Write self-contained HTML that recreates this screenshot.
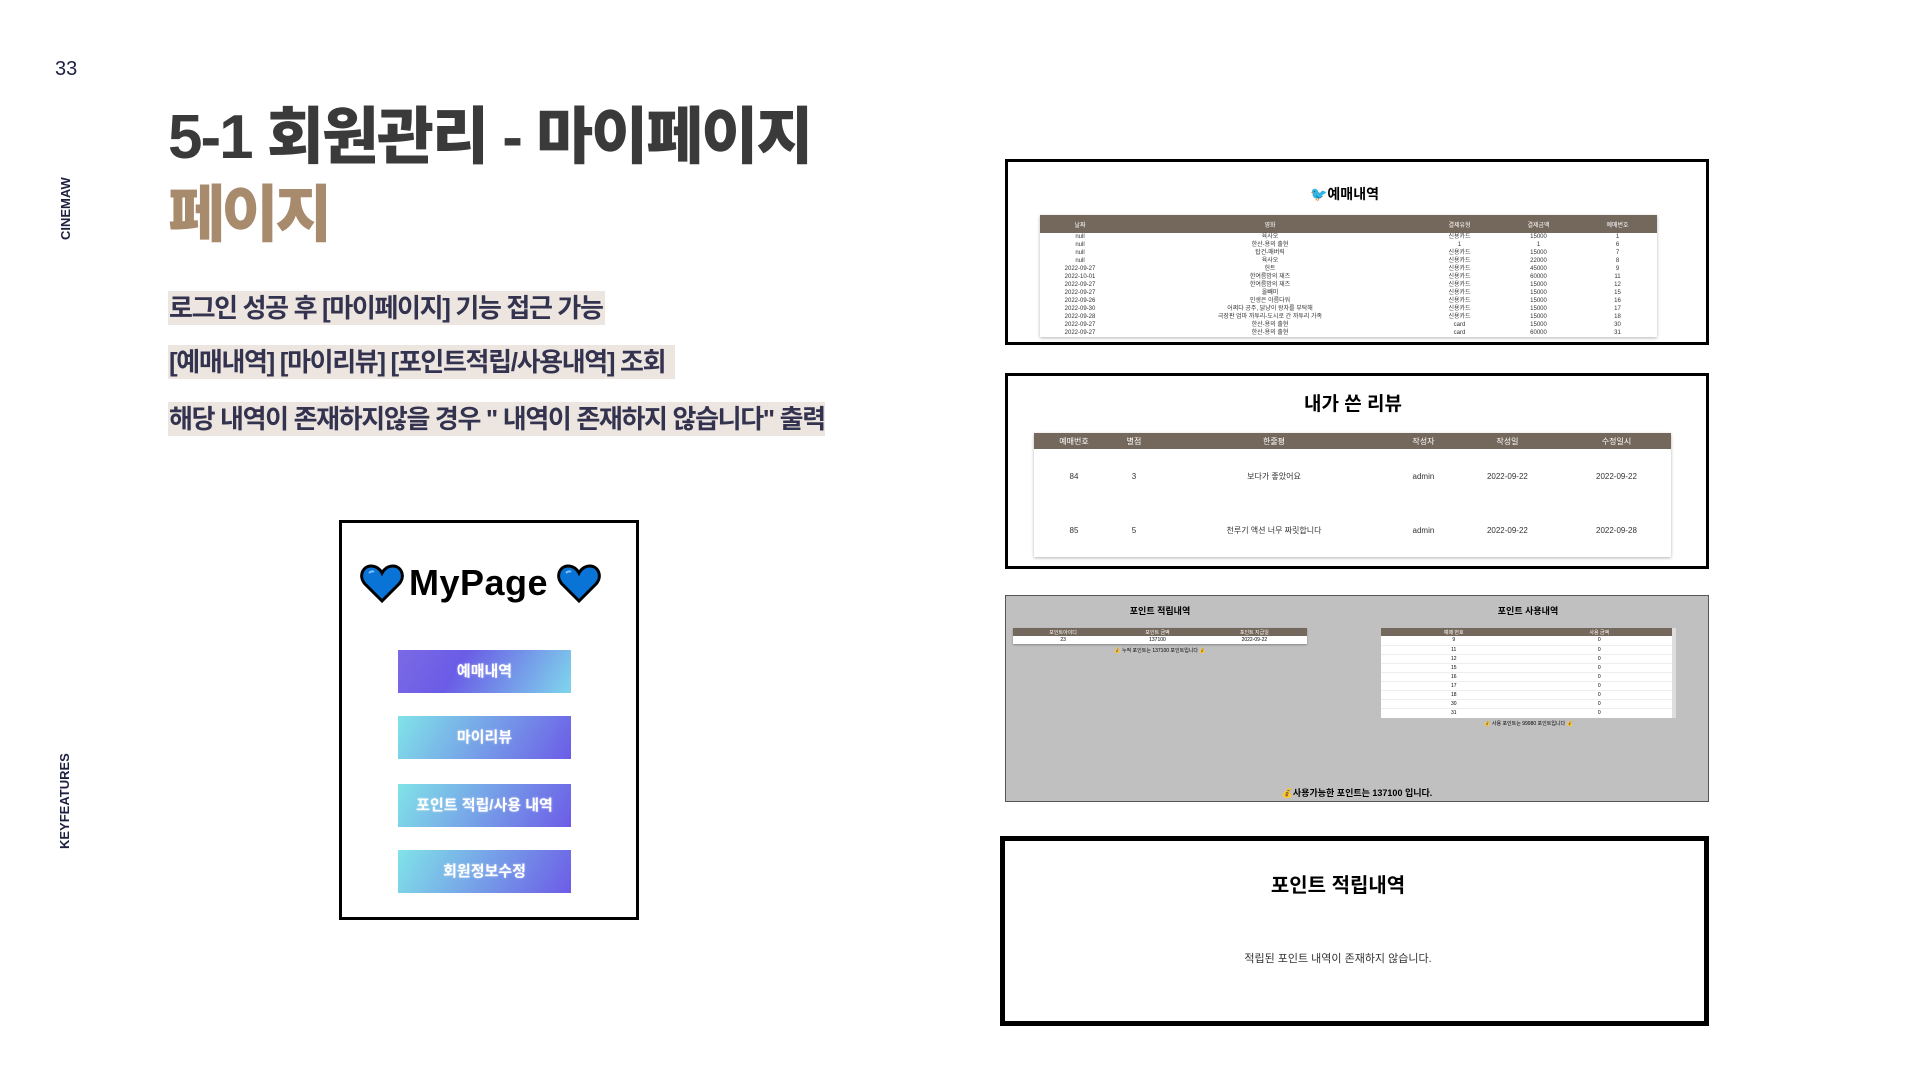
<!DOCTYPE html>
<html><head><meta charset="utf-8">
<style>
*{margin:0;padding:0;box-sizing:border-box}
body{width:1920px;height:1080px;background:#fff;position:relative;overflow:hidden;font-family:"Liberation Sans","Noto Sans CJK KR",sans-serif}
.a{position:absolute}
.vt{writing-mode:vertical-rl;transform:rotate(180deg);font-weight:bold;color:#1e2040;font-size:13px;letter-spacing:0}
.t1{left:168px;top:100px;font-size:62px;font-weight:900;color:#3a3a3a;letter-spacing:-2px;line-height:76px;white-space:nowrap}
.t2{left:168px;top:178px;font-size:62px;font-weight:900;color:#a88a6c;letter-spacing:-3.5px;line-height:76px}
.hl{left:168px;height:34px;background:#ede6e0;color:#33334f;font-size:26px;font-weight:bold;letter-spacing:-1.35px;line-height:34px;white-space:nowrap;padding:0 1px}
.panel{border:3px solid #000;background:#fff}
.brown{background:#74685d;color:#fff}
.btn{left:398px;width:173px;height:43px;color:#fff;font-weight:bold;font-size:15px;text-align:center;line-height:43px;text-shadow:0 0 2px rgba(255,255,255,.5)}
table{border-collapse:collapse;width:100%}
td,th{text-align:center;font-weight:normal;white-space:nowrap}
.bk td{line-height:7px;height:8px;padding:0}
</style></head><body>
<div class="a" style="left:55px;top:58px;font-size:20px;color:#1e2040">33</div>
<div class="a vt" style="left:58px;top:184px;height:56px">CINEMAW</div>
<div class="a vt" style="left:57px;top:763px;height:86px">KEYFEATURES</div>

<div class="a t1">5-1 회원관리 - 마이페이지</div>
<div class="a t2">페이지</div>
<div class="a hl" style="top:291px;width:437px">로그인 성공 후 [마이페이지] 기능 접근 가능</div>
<div class="a hl" style="top:345px;width:507px">[예매내역] [마이리뷰] [포인트적립/사용내역] 조회</div>
<div class="a hl" style="top:402px;width:657px">해당 내역이 존재하지않을 경우 " 내역이 존재하지 않습니다" 출력</div>

<!-- MyPage -->
<div class="a" style="left:339px;top:520px;width:300px;height:400px;border:3px solid #000;background:#fff"></div>
<svg class="a" style="left:360px;top:564px" width="44" height="40" viewBox="0 0 44 40"><path d="M22 37 L5 20 C-2 12 3 2 11 2 C16 2 20 5 22 9 C24 5 28 2 33 2 C41 2 46 12 39 20 Z" fill="#0a73d6" stroke="#000" stroke-width="3"/><path d="M9 9 C11 7 13 7 14 8" stroke="#7fc1ff" stroke-width="2" fill="none"/></svg>
<div class="a" style="left:409px;top:562px;font-size:36px;font-weight:bold;color:#000;font-family:'Liberation Sans',sans-serif;letter-spacing:0.5px">MyPage</div>
<svg class="a" style="left:557px;top:564px" width="44" height="40" viewBox="0 0 44 40"><path d="M22 37 L5 20 C-2 12 3 2 11 2 C16 2 20 5 22 9 C24 5 28 2 33 2 C41 2 46 12 39 20 Z" fill="#0a73d6" stroke="#000" stroke-width="3"/><path d="M9 9 C11 7 13 7 14 8" stroke="#7fc1ff" stroke-width="2" fill="none"/></svg>
<div class="a btn" style="top:650px;background:linear-gradient(120deg,#7b6ae6 0%,#6a5ce6 35%,#7fd6ec 100%)">예매내역</div>
<div class="a btn" style="top:716px;background:linear-gradient(120deg,#80e3e8 0%,#6c5ce7 100%)">마이리뷰</div>
<div class="a btn" style="top:784px;background:linear-gradient(120deg,#80e3e8 0%,#6c5ce7 100%)">포인트 적립/사용 내역</div>
<div class="a btn" style="top:850px;background:linear-gradient(120deg,#80e3e8 0%,#6c5ce7 100%)">회원정보수정</div>

<!-- 예매내역 -->
<div class="a panel" style="left:1005px;top:159px;width:704px;height:186px"></div>
<div class="a" style="left:1310px;top:184px;font-size:14px;font-weight:bold">🐦예매내역</div>
<div class="a" style="left:1040px;top:215px;width:617px;height:122px;overflow:hidden;box-shadow:0 1px 3px rgba(0,0,0,.3);font-size:6px;color:#333;background:#fff">
<table class="bk"><tr class="brown" style="height:18px"><th style="width:80px">날짜</th><th style="width:300px">영화</th><th>결제유형</th><th>결제금액</th><th>예매번호</th></tr>
<tr><td>null</td><td>육사오</td><td>신용카드</td><td>15000</td><td>1</td></tr>
<tr><td>null</td><td>한산-용의 출현</td><td>1</td><td>1</td><td>6</td></tr>
<tr><td>null</td><td>탑건-매버릭</td><td>신용카드</td><td>15000</td><td>7</td></tr>
<tr><td>null</td><td>육사오</td><td>신용카드</td><td>22000</td><td>8</td></tr>
<tr><td>2022-09-27</td><td>헌트</td><td>신용카드</td><td>45000</td><td>9</td></tr>
<tr><td>2022-10-01</td><td>한여름밤의 재즈</td><td>신용카드</td><td>60000</td><td>11</td></tr>
<tr><td>2022-09-27</td><td>한여름밤의 재즈</td><td>신용카드</td><td>15000</td><td>12</td></tr>
<tr><td>2022-09-27</td><td>올빼미</td><td>신용카드</td><td>15000</td><td>15</td></tr>
<tr><td>2022-09-26</td><td>인생은 아름다워</td><td>신용카드</td><td>15000</td><td>16</td></tr>
<tr><td>2022-09-30</td><td>어쩌다 공주, 닭냥이 왕자를 부탁해</td><td>신용카드</td><td>15000</td><td>17</td></tr>
<tr><td>2022-09-28</td><td>극장판 엄마 까투리-도시로 간 까투리 가족</td><td>신용카드</td><td>15000</td><td>18</td></tr>
<tr><td>2022-09-27</td><td>한산-용의 출현</td><td>card</td><td>15000</td><td>30</td></tr>
<tr><td>2022-09-27</td><td>한산-용의 출현</td><td>card</td><td>60000</td><td>31</td></tr>
</table></div>

<!-- 리뷰 -->
<div class="a panel" style="left:1005px;top:373px;width:704px;height:196px"></div>
<div class="a" style="left:1005px;top:389px;width:704px;text-align:center;font-size:19px;font-weight:bold;padding-right:8px">내가 쓴 리뷰</div>
<div class="a" style="left:1034px;top:433px;width:637px;height:124px;box-shadow:0 1px 3px rgba(0,0,0,.3);font-size:8px;color:#333;background:#fff">
<table><tr class="brown" style="height:16px"><th style="width:80px">예매번호</th><th style="width:40px">별점</th><th style="width:240px">한줄평</th><th>작성자</th><th>작성일</th><th>수정일시</th></tr>
<tr style="height:54px"><td>84</td><td>3</td><td>보다가 좋았어요</td><td>admin</td><td>2022-09-22</td><td>2022-09-22</td></tr>
<tr style="height:54px"><td>85</td><td>5</td><td>천루기 액션 너무 짜릿합니다</td><td>admin</td><td>2022-09-22</td><td>2022-09-28</td></tr>
</table></div>

<!-- 포인트 gray -->
<div class="a" style="left:1005px;top:595px;width:704px;height:207px;background:#c0c0c0;border:1px solid #555"></div>
<div class="a" style="left:1100px;top:604px;width:120px;text-align:center;font-size:9px;font-weight:bold">포인트 적립내역</div>
<div class="a" style="left:1468px;top:604px;width:120px;text-align:center;font-size:9px;font-weight:bold">포인트 사용내역</div>
<div class="a" style="left:1013px;top:628px;width:294px;font-size:5px;background:#fff;box-shadow:0 1px 2px rgba(0,0,0,.3)">
<table><tr class="brown" style="height:8px"><th>포인트아이디</th><th>포인트 금액</th><th>포인트 지급일</th></tr><tr style="height:8px"><td>23</td><td>137100</td><td>2022-09-22</td></tr></table></div>
<div class="a" style="left:1013px;top:647px;width:294px;text-align:center;font-size:5px">💰 누적 포인트는 137100 포인트입니다 💰</div>
<div class="a" style="left:1381px;top:628px;width:295px;height:90px;font-size:5px;background:#fff;overflow:hidden;border-right:4px solid #ddd">
<table><tr class="brown" style="height:8px"><th>예매 번호</th><th>사용 금액</th></tr>
<tr style="height:9px;border-bottom:1px solid #eee"><td>9</td><td>0</td></tr><tr style="height:9px;border-bottom:1px solid #eee"><td>11</td><td>0</td></tr><tr style="height:9px;border-bottom:1px solid #eee"><td>12</td><td>0</td></tr><tr style="height:9px;border-bottom:1px solid #eee"><td>15</td><td>0</td></tr><tr style="height:9px;border-bottom:1px solid #eee"><td>16</td><td>0</td></tr><tr style="height:9px;border-bottom:1px solid #eee"><td>17</td><td>0</td></tr><tr style="height:9px;border-bottom:1px solid #eee"><td>18</td><td>0</td></tr><tr style="height:9px;border-bottom:1px solid #eee"><td>30</td><td>0</td></tr><tr style="height:9px"><td>31</td><td>0</td></tr></table></div>
<div class="a" style="left:1381px;top:720px;width:295px;text-align:center;font-size:5px">💰 사용 포인트는 99980 포인트입니다 💰</div>
<div class="a" style="left:1005px;top:786px;width:704px;text-align:center;font-size:9px;font-weight:bold">💰사용가능한 포인트는 137100 입니다.</div>

<!-- 빈 내역 -->
<div class="a" style="left:1000px;top:836px;width:709px;height:190px;border:5px solid #000;background:#fff"></div>
<div class="a" style="left:1000px;top:869px;width:676px;text-align:center;font-size:20px;font-weight:bold">포인트 적립내역</div>
<div class="a" style="left:1000px;top:950px;width:676px;text-align:center;font-size:11px;color:#333">적립된 포인트 내역이 존재하지 않습니다.</div>
</body></html>
